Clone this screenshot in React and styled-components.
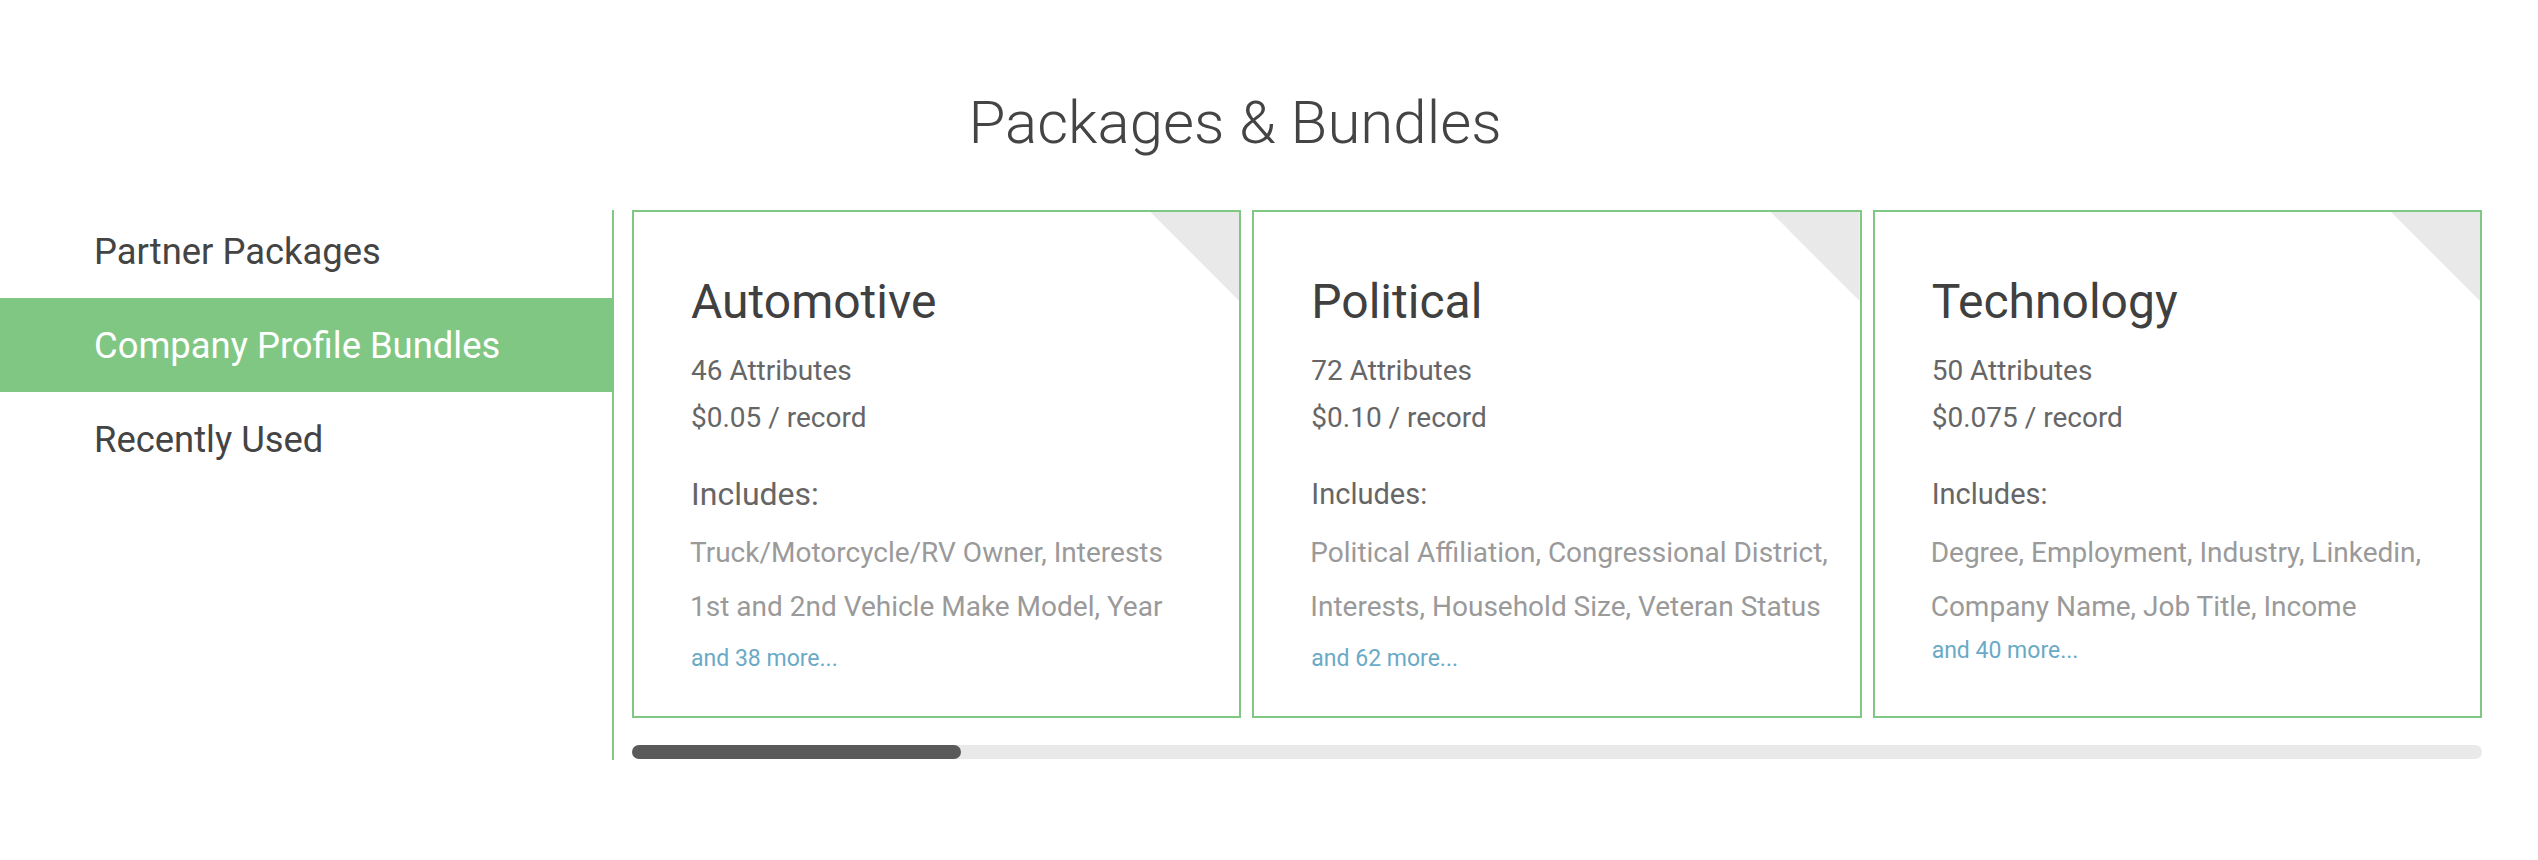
import styled, { createGlobalStyle } from 'styled-components';

const GlobalStyle = createGlobalStyle`
  html, body {
    margin: 0;
    padding: 0;
    background: #ffffff;
    font-family: Roboto, "Liberation Sans", Arial, sans-serif;
  }
`;

const GREEN = '#81c784';

const menu = [
  { label: 'Partner Packages', active: false },
  { label: 'Company Profile Bundles', active: true },
  { label: 'Recently Used', active: false },
];

const bundles = [
  {
    name: 'Automotive',
    attributes: 46,
    price: '$0.05',
    lines: ['Truck/Motorcycle/RV Owner, Interests', '1st and 2nd Vehicle Make Model, Year'],
    more: 38,
    large: true,
  },
  {
    name: 'Political',
    attributes: 72,
    price: '$0.10',
    lines: ['Political Affiliation, Congressional District,', 'Interests, Household Size, Veteran Status'],
    more: 62,
  },
  {
    name: 'Technology',
    attributes: 50,
    price: '$0.075',
    lines: ['Degree, Employment, Industry, Linkedin,', 'Company Name, Job Title, Income'],
    more: 40,
    tight: true,
  },
];

export default function App() {
  return (
    <Page>
      <GlobalStyle />
      <Title>Packages &amp; Bundles</Title>
      <Body>
        <Sidebar>
          {menu.map((item) => (
            <MenuItem key={item.label} $active={item.active}>
              {item.label}
            </MenuItem>
          ))}
        </Sidebar>
        <Section>
          <CardRow>
            {bundles.map((b) => (
              <Card key={b.name}>
                <Corner />
                <CardTitle>{b.name}</CardTitle>
                <Meta>{b.attributes} Attributes</Meta>
                <Meta>{b.price} / record</Meta>
                <Includes $large={b.large}>Includes:</Includes>
                <List>
                  {b.lines.map((line) => (
                    <Line key={line}>{line}</Line>
                  ))}
                </List>
                <More $tight={b.tight}>and {b.more} more...</More>
              </Card>
            ))}
          </CardRow>
          <Track>
            <Thumb />
          </Track>
        </Section>
      </Body>
    </Page>
  );
}

const Page = styled.div`
  padding-top: 88px;
  padding-bottom: 100px;
`;

const Title = styled.h1`
  margin: 0;
  padding-right: 68px;
  font-size: 60px;
  line-height: 70px;
  font-weight: 300;
  color: #444444;
  text-align: center;
`;

const Body = styled.div`
  display: flex;
  align-items: flex-start;
  margin-top: 46px;
`;

const Sidebar = styled.ul`
  width: 612px;
  flex: none;
  margin: 0;
  padding: 0;
  list-style: none;
`;

const MenuItem = styled.li`
  display: flex;
  align-items: center;
  height: 94px;
  padding-left: 94px;
  font-size: 36.4px;
  color: ${({ $active }) => ($active ? '#ffffff' : '#444444')};
  background: ${({ $active }) => ($active ? GREEN : 'transparent')};
`;

const Section = styled.section`
  flex: 1;
  margin-top: 6px;
  padding: 0 56px 1px 18px;
  border-left: 2px solid ${GREEN};
`;

const CardRow = styled.div`
  display: grid;
  grid-template-columns: repeat(3, 1fr);
  gap: 11px;
`;

const Card = styled.article`
  position: relative;
  box-sizing: border-box;
  height: 508px;
  padding: 62px 20px 0 57px;
  border: 2px solid ${GREEN};
  overflow: hidden;
`;

const Corner = styled.span`
  position: absolute;
  top: 0;
  right: 0;
  width: 89px;
  height: 89px;
  background: #e9e9e9;
  clip-path: polygon(0 0, 100% 0, 100% 100%);
`;

const CardTitle = styled.h2`
  margin: 0 0 17px;
  font-size: 48px;
  line-height: 56px;
  font-weight: 400;
  color: #404040;
`;

const Meta = styled.p`
  margin: 0;
  font-size: 28px;
  line-height: 47px;
  color: #666666;
`;

const Includes = styled.h3`
  margin: 33px 0 0;
  font-size: ${({ $large }) => ($large ? '32px' : '29px')};
  line-height: 40px;
  font-weight: 400;
  color: #666666;
`;

const List = styled.div`
  margin-top: 12px;
  margin-left: -1px;
  font-size: 28px;
  line-height: 54px;
  color: #9a9a9a;
`;

const Line = styled.span`
  display: block;
  white-space: nowrap;
`;

const More = styled.a`
  display: block;
  margin-top: ${({ $tight }) => ($tight ? '2px' : '10px')};
  font-size: 23px;
  line-height: 30px;
  color: #6aaac6;
  cursor: pointer;
`;

const Track = styled.div`
  margin-top: 27px;
  height: 14px;
  border-radius: 7px;
  background: #e9e9e9;
`;

const Thumb = styled.div`
  width: 329px;
  height: 100%;
  border-radius: 7px;
  background: #5a5a5a;
`;
